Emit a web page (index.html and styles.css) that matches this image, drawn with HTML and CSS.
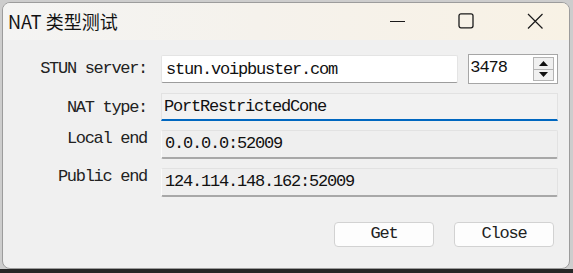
FILE: index.html
```html
<!DOCTYPE html>
<html lang="zh-CN">
<head>
    <meta charset="UTF-8">
    <title>NAT 类型测试</title>
    <link rel="stylesheet" href="styles.css">
</head>
<body>
    <div class="window">
        <div class="titlebar">
            <span class="title">NAT 类型测试</span>
            <div class="controls">
                <span class="ctl ctl-min">
                    <svg width="16" height="16" viewBox="0 0 16 16"><path d="M1 8.5h15" stroke="#1a1a1a" stroke-width="1.1" fill="none"/></svg>
                </span>
                <span class="ctl ctl-max">
                    <svg width="16" height="16" viewBox="0 0 16 16"><rect x="1" y="0.8" width="14" height="14" rx="2" stroke="#1a1a1a" stroke-width="1.3" fill="none"/></svg>
                </span>
                <span class="ctl ctl-close">
                    <svg width="16" height="16" viewBox="0 0 16 16"><path d="M1 1l14.5 14.5M15.5 1L1 15.5" stroke="#1a1a1a" stroke-width="1.2" fill="none"/></svg>
                </span>
            </div>
        </div>

        <div class="content">
            <div class="form">
                <div class="lbl">STUN server:</div>
                <div class="server-row">
                    <div class="field field-input">stun.voipbuster.com</div>
                    <div class="port">
                        <span class="port-value">3478</span>
                        <div class="spin">
                            <span class="spin-btn"><svg width="9" height="5" viewBox="0 0 9 5"><path d="M4.5 0L9 5H0z" fill="#111"/></svg></span>
                            <span class="spin-btn"><svg width="9" height="5" viewBox="0 0 9 5"><path d="M0 0h9L4.5 5z" fill="#111"/></svg></span>
                        </div>
                    </div>
                </div>

                <div class="lbl">NAT type:</div>
                <div class="field field-focus">PortRestrictedCone</div>

                <div class="lbl lbl-top">Local end</div>
                <div class="field field-read">0.0.0.0:52009</div>

                <div class="lbl lbl-top">Public end</div>
                <div class="field field-read">124.114.148.162:52009</div>
            </div>

            <div class="actions">
                <button class="btn">Get</button>
                <button class="btn">Close</button>
            </div>
        </div>
    </div>
</body>
</html>
```

FILE: styles.css
```css
:root {
    --face: #f0f0f0;
    --accent: #0067c0;
    --text: #111;
    --mono: "Liberation Mono", "Noto Sans CJK SC", monospace;
}

html, body {
    margin: 0;
    height: 100%;
}

body {
    background: linear-gradient(to bottom, #cdcdcd 0, #cdcdcd 269px, #262626 269px);
    padding: 2px 3px 0 2px;
    box-sizing: border-box;
}

.window {
    width: 568px;
    height: 267px;
    box-sizing: border-box;
    border: 1px solid #9c9c9c;
    border-radius: 8px;
    overflow: hidden;
    background: var(--face);
    display: flex;
    flex-direction: column;
}

.titlebar {
    height: 37px;
    display: flex;
    align-items: center;
    justify-content: space-between;
    background: linear-gradient(to right, #f4f4f3 0%, #f5f2ec 45%, #f8f2e5 100%);
}

.title {
    font-family: "Noto Sans CJK SC", "Noto Sans", sans-serif;
    font-size: 18px;
    color: #111;
    padding-left: 5px;
    margin-top: -1px;
}

.controls {
    display: flex;
    height: 100%;
}

.ctl {
    width: 70px;
    display: flex;
    align-items: center;
    justify-content: center;
    margin-top: -2px;
}

.ctl-min {
    width: 69px;
}

.ctl-close {
    width: 68px;
}

.content {
    flex: 1;
    padding: 14px 13px 0 0;
}

.form {
    display: grid;
    grid-template-columns: 144px 397px;
    grid-template-rows: 30px 28px 29px 29px;
    column-gap: 14px;
    row-gap: 9px;
}

.lbl {
    font-family: var(--mono);
    font-size: 17px;
    letter-spacing: -1.3px;
    color: #222;
    text-align: right;
    line-height: 30px;
    white-space: nowrap;
}

.lbl-top {
    line-height: 20px;
    margin-top: -1px;
}

.server-row {
    display: flex;
    align-items: center;
    gap: 10px;
}

.field {
    box-sizing: border-box;
    font-family: var(--mono);
    font-size: 17px;
    letter-spacing: -1.2px;
    color: var(--text);
    padding-left: 4px;
    display: flex;
    align-items: center;
    white-space: nowrap;
}

.field-input {
    width: 298px;
    height: 28px;
    background: #fff;
    border: 1px solid #e4e4e4;
    border-bottom-color: #9c9c9c;
    border-radius: 2px;
}

.field-focus {
    height: 28px;
    background: #f2f2f2;
    border: 1px solid #e2e2e2;
    border-bottom: 2px solid var(--accent);
    padding-left: 2px;
}

.field-read {
    background: #efefef;
    border: 1px solid #e2e2e2;
    border-left-color: #fafafa;
    border-bottom: 2px solid #a8a8a8;
    border-radius: 2px;
    padding-left: 3px;
    padding-bottom: 2px;
}

.port {
    width: 90px;
    height: 30px;
    box-sizing: border-box;
    background: #fff;
    border: 1px solid #a6a6a6;
    display: flex;
    align-items: center;
    justify-content: space-between;
    padding: 0 3px 0 1px;
}

.port-value {
    font-family: var(--mono);
    font-size: 17px;
    letter-spacing: -1px;
    color: var(--text);
    margin-top: -4px;
}

.spin {
    display: flex;
    flex-direction: column;
    width: 21px;
    height: 24px;
    border: 1px solid #b4b4b4;
    box-sizing: border-box;
}

.spin-btn {
    flex: 1;
    display: flex;
    align-items: center;
    justify-content: center;
    background: #f0f0f0;
}

.spin-btn + .spin-btn {
    border-top: 1px solid #b4b4b4;
}

.actions {
    display: flex;
    justify-content: flex-end;
    gap: 20px;
    margin-top: 25px;
    padding-right: 2px;
}

.btn {
    width: 100px;
    height: 25px;
    box-sizing: border-box;
    background: #fdfdfd;
    border: 1px solid #d2d2d2;
    border-radius: 4px;
    font-family: var(--mono);
    font-size: 17px;
    letter-spacing: -1.2px;
    color: #222;
    padding: 0 0 2px;
}
```
